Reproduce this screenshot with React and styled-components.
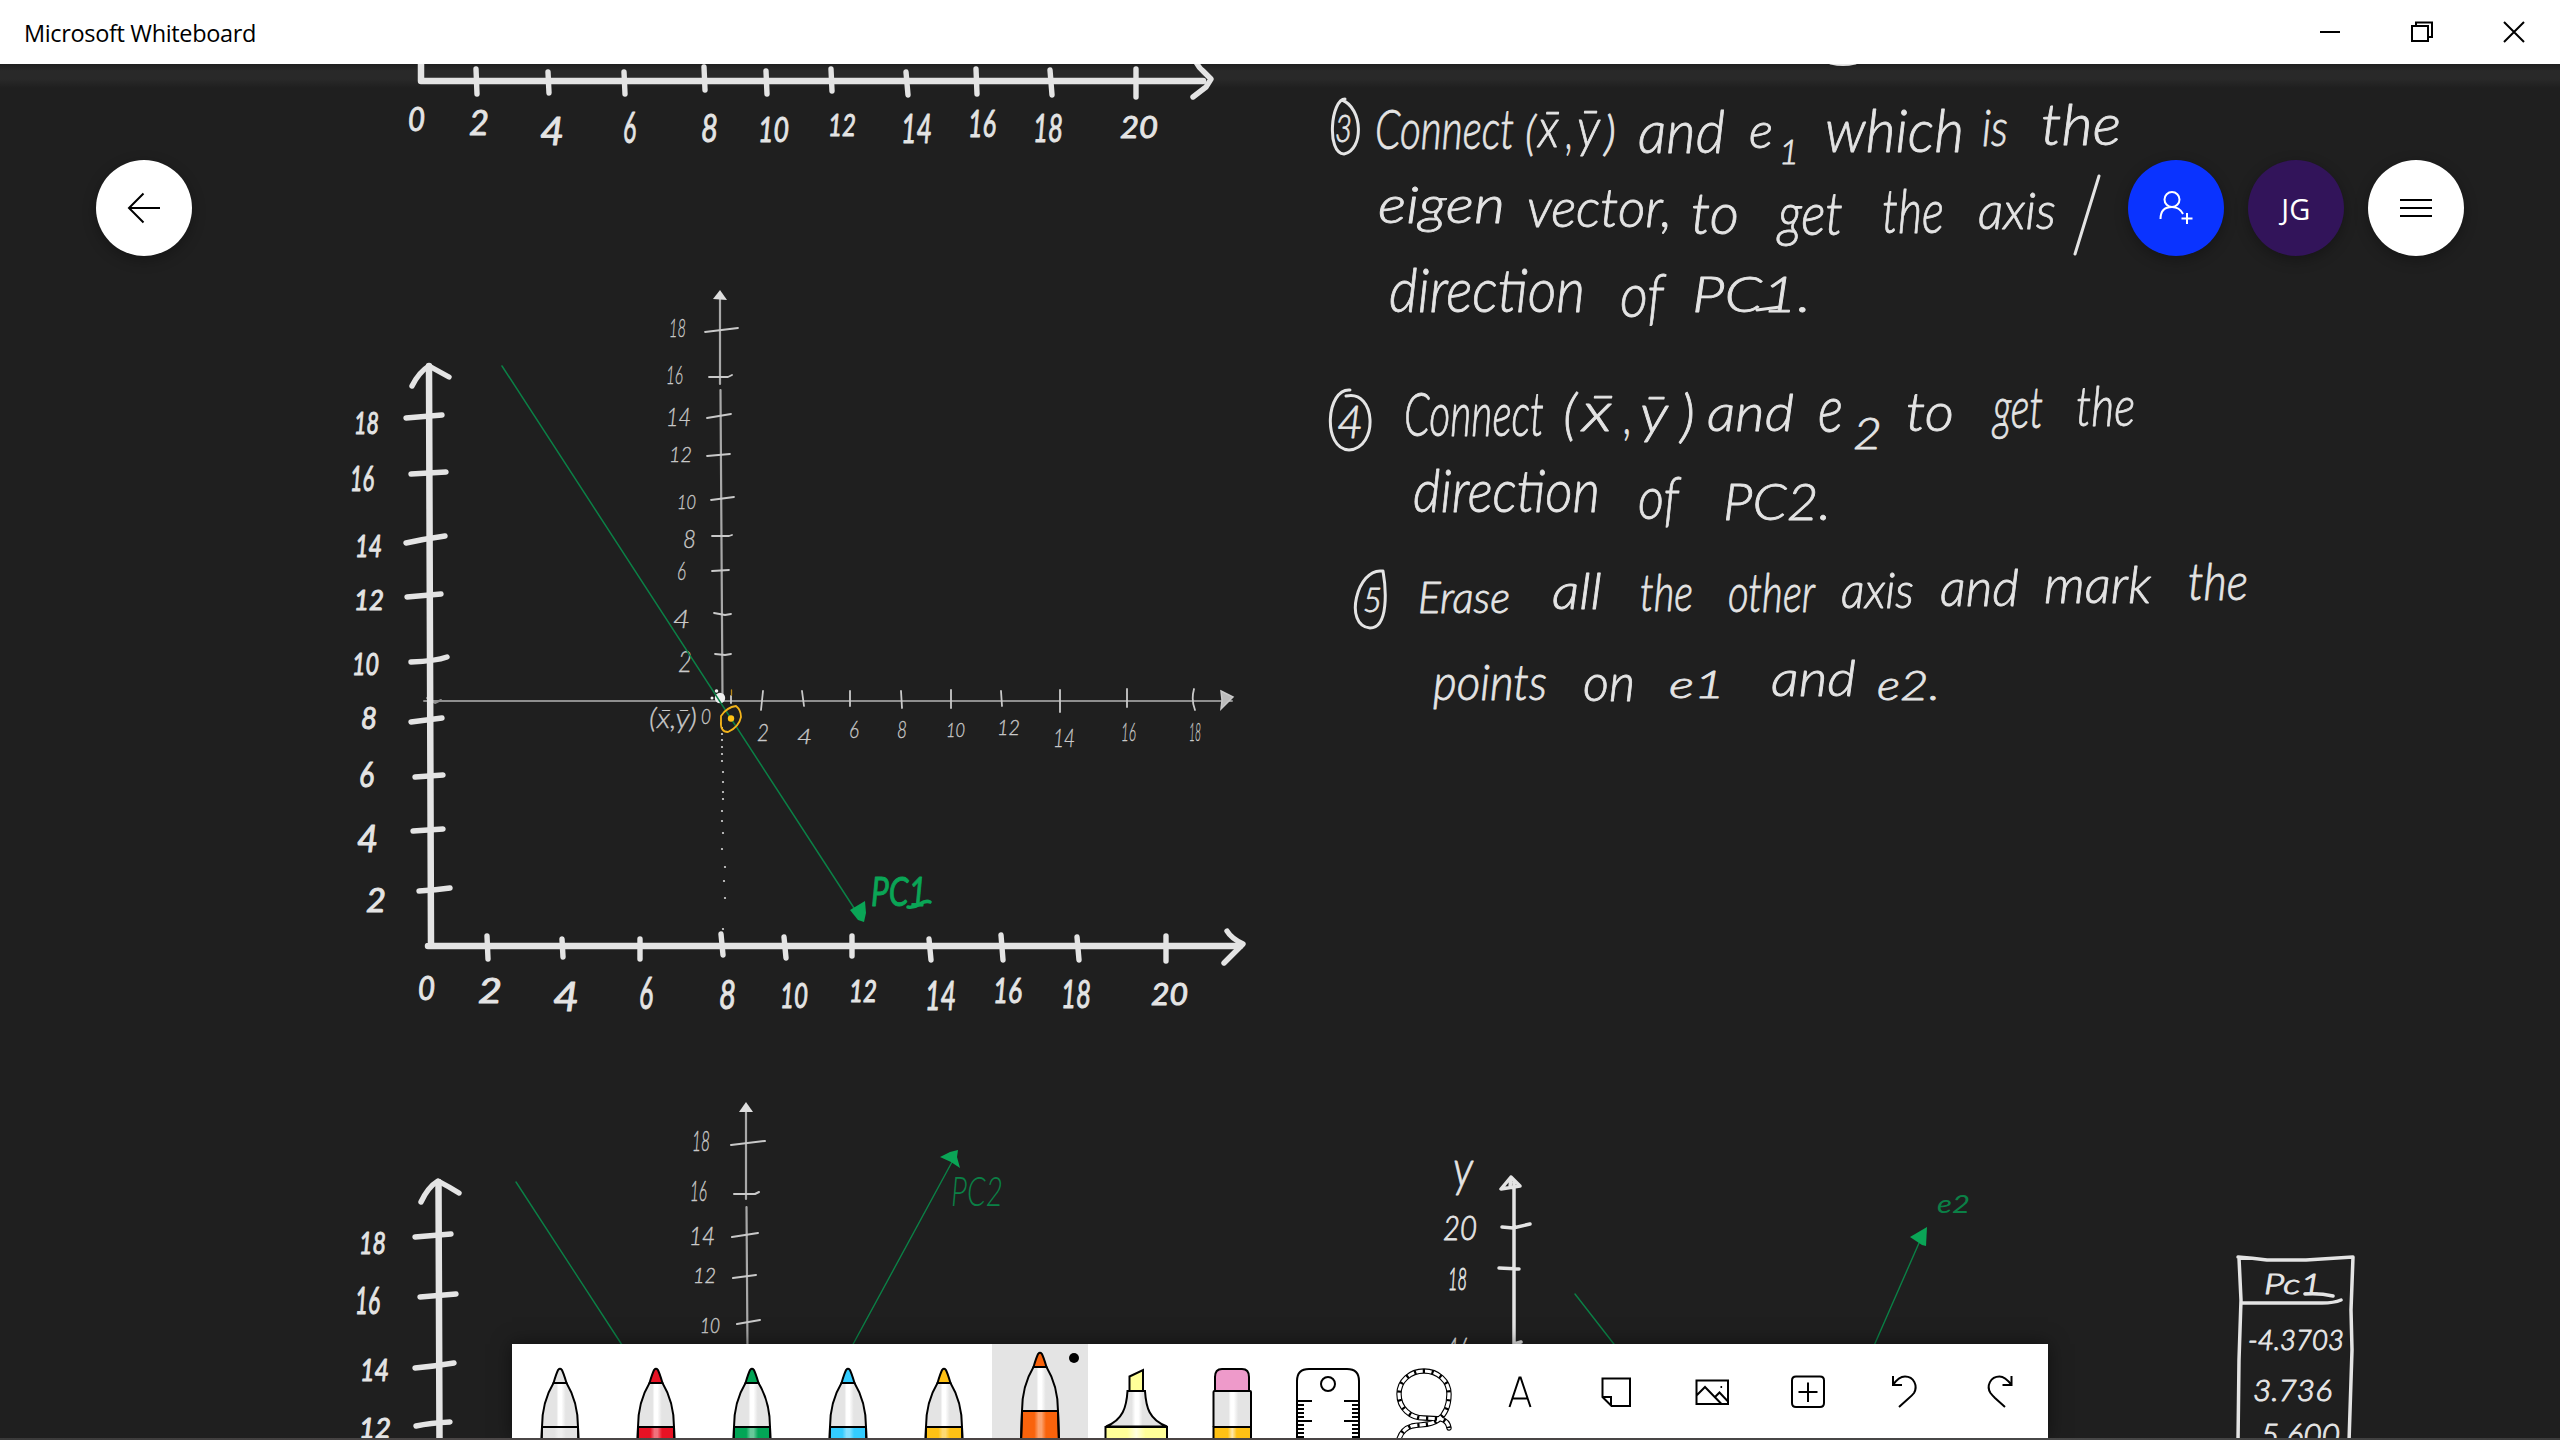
import React from "react";
import styled, { createGlobalStyle } from "styled-components";

const GlobalStyle = createGlobalStyle`
  html, body { margin: 0; padding: 0; background: #1f1f1f; overflow: hidden; }
  *, *::before, *::after { box-sizing: border-box; }
`;

const INK = "#e4e4e4";
const PALE = "#c9c9c9";
const GREEN = "#0aa556";
const DEEP_GREEN = "#0b8046";

/* ---------- window frame ---------- */

const Window = styled.div`
  width: 2560px;
  height: 1440px;
  display: grid;
  grid-template-rows: 64px 1fr 2px;
  background: #1f1f1f;
  font-family: "Open Sans", "Noto Sans", sans-serif;
`;

const TitleBar = styled.header`
  display: flex;
  align-items: center;
  justify-content: space-between;
  background: #ffffff;
  padding-left: 24px;
`;

const Title = styled.span`
  font-size: 23.5px;
  line-height: 32px;
  letter-spacing: -0.35px;
  padding-top: 2px;
  color: #000;
  white-space: nowrap;
`;

const WindowControls = styled.div`
  display: flex;
  height: 100%;
`;

const ControlButton = styled.button`
  width: 92px;
  height: 64px;
  padding: 0;
  border: 0;
  background: transparent;
  display: flex;
  align-items: center;
  justify-content: center;
`;

const Board = styled.main`
  position: relative;
  overflow: hidden;
  background: linear-gradient(#1f1f1f 0, #292929 7px, #292929 15px, #1f1f1f 24px);
`;

const Ink = styled.svg`
  display: block;
  width: 2560px;
  height: 1374px;
`;

const Script = styled.text`
  font-family: Lato, "Noto Sans", sans-serif;
  font-style: italic;
  font-weight: ${(p) => (p.$light ? 300 : 400)};
  stroke-linejoin: round;
`;

const TaskbarEdge = styled.div`
  background: linear-gradient(90deg, #3a3a3a 0, #4b4747 500px, #4a4444 1100px, #484848 2050px, #3c3c3c 100%);
`;

/* ---------- floating buttons ---------- */

const FloatingRow = styled.nav`
  position: absolute;
  top: 96px;
  left: 96px;
  right: 96px;
  display: flex;
  justify-content: space-between;
`;

const ButtonGroup = styled.div`
  display: flex;
  gap: 24px;
`;

const RoundButton = styled.button`
  width: 96px;
  height: 96px;
  padding: 0;
  border: 0;
  border-radius: 50%;
  display: flex;
  align-items: center;
  justify-content: center;
  background: ${(p) => p.$bg};
  color: ${(p) => p.$fg};
  font: 400 29px/1 "Open Sans", "Noto Sans", sans-serif;
  letter-spacing: 0.4px;
  box-shadow: 0 4px 14px rgba(0, 0, 0, 0.3);
`;

/* ---------- toolbar ---------- */

const Toolbar = styled.div`
  position: absolute;
  left: 512px;
  bottom: 0;
  height: 94px;
  display: flex;
  background: #ffffff;
  box-shadow: 0 0 18px rgba(0, 0, 0, 0.5);
`;

const Tool = styled.button`
  width: 96px;
  height: 94px;
  padding: 0;
  border: 0;
  background: ${(p) => (p.$active ? "#e4e4e4" : "transparent")};
`;

const ToolArt = styled.svg`
  display: block;
  width: 96px;
  height: 94px;
  fill: none;
  stroke: #000;
  stroke-width: 2;
`;

function Pen({ color, active }) {
  const id = "barrel" + color.slice(1);
  return (
    <Tool $active={active}>
      <ToolArt viewBox="0 0 96 94">
        <defs>
          <linearGradient id={id}>
            <stop offset="0.4" stopColor="#e4e4e4" />
            <stop offset="0.46" stopColor="#fff" />
            <stop offset="0.54" stopColor="#fff" />
            <stop offset="0.66" stopColor="#e4e4e4" />
          </linearGradient>
          <linearGradient id={id + "s"}>
            <stop offset="0.35" stopColor="#fff" stopOpacity="0" />
            <stop offset="0.46" stopColor="#fff" stopOpacity="0.4" />
            <stop offset="0.54" stopColor="#fff" stopOpacity="0.4" />
            <stop offset="0.66" stopColor="#fff" stopOpacity="0" />
          </linearGradient>
        </defs>
        <g transform={active ? undefined : "translate(0 16)"}>
          <path d="M41.5 23C43 18 45 12 46.2 9.8Q48 7.6 49.8 9.8C51 12 53 18 54.5 23Z" fill={color} />
          <path d="M41.5 23C33 37 30 53 30 67H66C66 53 63 37 54.5 23Z" fill={`url(#${id})`} />
          <path d="M30 67L29 98H67L66 67Z" fill={color} />
          <path d="M30 67L29 98H67L66 67Z" fill={`url(#${id}s)`} />
        </g>
        {active && <circle cx="82" cy="14" r="5" fill="#000" stroke="none" />}
      </ToolArt>
    </Tool>
  );
}

function Highlighter() {
  return (
    <Tool>
      <ToolArt viewBox="0 0 96 94">
        <defs>
          <linearGradient id="neck">
            <stop offset="0.42" stopColor="#e4e4e4" />
            <stop offset="0.48" stopColor="#fff" />
            <stop offset="0.53" stopColor="#fff" />
            <stop offset="0.6" stopColor="#e4e4e4" />
          </linearGradient>
          <linearGradient id="glow">
            <stop offset="0.35" stopColor="#ffff99" />
            <stop offset="0.5" stopColor="#ffffe0" />
            <stop offset="0.65" stopColor="#ffff99" />
          </linearGradient>
        </defs>
        <path d="M41.5 32.5L55 26V47H41.5Z" fill="#ffff99" />
        <path d="M39.5 47H57C58 63 61 76 79 82.5H18C35 76 38.5 63 39.5 47Z" fill="url(#neck)" />
        <path d="M17.5 83H79V98H17.5Z" fill="url(#glow)" />
      </ToolArt>
    </Tool>
  );
}

function Eraser() {
  return (
    <Tool>
      <ToolArt viewBox="0 0 96 94">
        <defs>
          <linearGradient id="band">
            <stop offset="0.38" stopColor="#ffc114" />
            <stop offset="0.5" stopColor="#ffe9ac" />
            <stop offset="0.62" stopColor="#ffc114" />
          </linearGradient>
        </defs>
        <path d="M31 47V33Q31 25 38 25H58Q65 25 65 33V47Z" fill="#ee9aca" />
        <rect x="29.5" y="47" width="37.5" height="36" rx="1" fill="url(#barrelffc114)" />
        <rect x="29.5" y="83" width="37.5" height="16" fill="url(#band)" />
      </ToolArt>
    </Tool>
  );
}

function Ruler() {
  const marks = [57, 61, 65, 69, 73, 77, 81, 85, 89, 93];
  return (
    <Tool>
      <ToolArt viewBox="0 0 96 94">
        <path d="M17 98V37Q17 25 29 25H67Q79 25 79 37V98" />
        <circle cx="48" cy="40" r="7" />
        {marks.map((y) => {
          const w = y === 57 || y === 77 ? 15 : 7;
          return <path key={y} d={`M17 ${y}h${w}M79 ${y}h${-w}`} />;
        })}
      </ToolArt>
    </Tool>
  );
}

function Lasso() {
  const rope =
    "M73 84Q72 77 65 75Q58 74.5 48 74C34 74 23 64 23 50C23 37 34 27 48 27C62 27 73 37 73 50C73 62 70 70 62 76C54 82 46 80 36 82Q26 85 23 95";
  return (
    <Tool>
      <ToolArt viewBox="0 0 96 94">
        <path d={rope} strokeWidth="5.4" strokeLinecap="round" />
        <path d={rope} stroke="#fff" strokeWidth="3.2" strokeLinecap="round" />
        <path d={rope} strokeWidth="4" strokeDasharray="2.2 6.6" strokeDashoffset="-8" />
      </ToolArt>
    </Tool>
  );
}

const glyphs = {
  text: "M37.5 63L47.4 33.5H48.6L58.5 63M41 54.5H55",
  note: "M34.5 34.5H62V62H43.5L34.5 53ZM34.5 53H43V62",
  image: "M32.5 36.5H64V60H32.5ZM32.5 51.5L41 43L57.5 60M51 53L55.5 48.5L64 57.5M56.5 43h1.6",
  insert: "M36 32.5H60Q64 32.5 64 36.5V59Q64 63 60 63H36Q32 63 32 59V36.5Q32 32.5 36 32.5ZM48 38.5V58M38.5 48H57.5",
  undo: "M37 32V41H46M37 41C41 35 44 32.5 49 32.5C58 32.5 62 42 58 49Q56.5 51 53 54L43 63",
  redo: "M59.5 32V41H50.5M59.5 41C55 35 52 32.5 47.500 32.5C38.5 32.5 34 42 38.5 49Q40 51 43 54L53 63",
};

function GlyphTool({ name }) {
  return (
    <Tool aria-label={name}>
      <ToolArt viewBox="0 0 96 94">
        <path d={glyphs[name]} />
      </ToolArt>
    </Tool>
  );
}

/* ---------- handwriting ---------- */

/* A label fitted to a box: [text, left, right, top, baseline] */
function Labels({ items, color = INK, weight = 1.2, light = false }) {
  return items.map(([t, x0, x1, y0, y1], i) => (
    <Script
      key={i}
      $light={light}
      x={x0}
      y={y1}
      fontSize={(y1 - y0) / 0.73}
      textLength={x1 - x0}
      lengthAdjust="spacingAndGlyphs"
      fill={color}
      stroke={color}
      strokeWidth={weight}
    >
      {t}
    </Script>
  ));
}

function Strokes({ d, width = 5.4, color = INK }) {
  return (
    <path d={d} fill="none" stroke={color} strokeWidth={width} strokeLinecap="round" strokeLinejoin="round" />
  );
}

const topLabels = [
  ["0", 408, 425, 107, 131], ["2", 469, 489, 110, 135], ["4", 540, 564, 117, 145],
  ["6", 623, 636, 112, 143], ["8", 701, 718, 114, 142], ["10", 758, 789, 117, 142],
  ["12", 828, 856, 113, 136], ["14", 901, 932, 114, 143], ["16", 968, 996, 110, 137],
  ["18", 1033, 1063, 114, 142], ["20", 1120, 1158, 115, 138],
];

const outerLabels = [
  ["18", 354, 379, 412, 434], ["16", 350, 374, 465, 491], ["14", 355, 382, 534, 557],
  ["12", 354, 384, 590, 610], ["10", 352, 379, 652, 675], ["8", 361, 377, 707, 729],
  ["6", 359, 374, 762, 787], ["4", 357, 378, 825, 852], ["2", 366, 386, 888, 912],
  ["0", 418, 435, 976, 1000], ["2", 478, 502, 978, 1003], ["4", 553, 579, 981, 1011],
  ["6", 639, 653, 977, 1009], ["8", 719, 736, 980, 1009], ["10", 780, 808, 982, 1008],
  ["12", 849, 877, 980, 1002], ["14", 925, 956, 981, 1010], ["16", 993, 1022, 977, 1003],
  ["18", 1061, 1091, 980, 1008], ["20", 1151, 1188, 982, 1005],
];

const innerLabels = [
  ["18", 669, 686, 318, 337], ["16", 666, 683, 365, 384], ["14", 666, 691, 408, 426],
  ["12", 669, 692, 447, 462], ["10", 677, 696, 495, 509], ["8", 683, 696, 530, 548],
  ["6", 677, 686, 562, 580], ["4", 673, 690, 609, 628], ["2", 678, 692, 650, 672],
  ["0", 701, 711, 709, 724], ["2", 757, 769, 724, 741], ["4", 797, 812, 729, 744],
  ["6", 849, 859, 721, 738], ["8", 897, 907, 721, 738], ["10", 946, 965, 723, 737],
  ["12", 997, 1020, 720, 735], ["14", 1053, 1075, 729, 747], ["16", 1121, 1136, 722, 741],
  ["18", 1189, 1201, 723, 741],
];

const lowerOuter = [
  ["18", 359, 386, 1231, 1254], ["16", 355, 380, 1287, 1314], ["14", 360, 389, 1358, 1381],
  ["12", 359, 391, 1418, 1438],
];

const lowerInner = [
  ["18", 692, 710, 1131, 1151], ["16", 690, 707, 1181, 1201], ["14", 689, 715, 1226, 1245],
  ["12", 693, 716, 1267, 1283], ["10", 700, 720, 1318, 1333],
];

const notes = [
  ["3", 1335, 1352, 114, 142], ["Connect", 1375, 1514, 109, 149],
  ["(", 1525, 1536, 116, 150], ["x\u0304", 1538, 1559, 108, 147], [",", 1566, 1573, 110, 149],
  ["y\u0304", 1577, 1600, 108, 147], [")", 1604, 1616, 116, 150],
  ["and", 1638, 1725, 110, 153], ["e", 1749, 1773, 112, 148], ["1", 1779, 1799, 139, 164],
  ["which", 1825, 1964, 109, 152], ["is", 1982, 2008, 108, 146], ["the", 2041, 2121, 103, 145],
  ["eigen", 1378, 1505, 186, 223], ["vector,", 1527, 1672, 188, 227], ["to", 1691, 1739, 192, 234],
  ["get", 1778, 1843, 192, 235], ["the", 1882, 1944, 188, 233], ["axis", 1978, 2056, 191, 229],
  ["direction", 1389, 1585, 268, 312], ["of", 1620, 1664, 272, 317], ["PC1.", 1692, 1811, 276, 312],
  ["4", 1337, 1363, 405, 438], ["Connect", 1404, 1544, 392, 436],
  ["(", 1563, 1577, 394, 434], ["x\u0304", 1582, 1612, 392, 431], [",", 1624, 1632, 395, 434],
  ["y\u0304", 1640, 1668, 394, 433], [")", 1680, 1695, 394, 436],
  ["and", 1707, 1794, 393, 431], ["e", 1818, 1843, 384, 432], ["2", 1853, 1882, 417, 449],
  ["to", 1906, 1954, 392, 431], ["get", 1993, 2043, 386, 428], ["the", 2076, 2135, 385, 426],
  ["direction", 1413, 1600, 469, 512], ["of", 1638, 1679, 476, 519], ["PC2.", 1723, 1831, 483, 520],
  ["5", 1363, 1382, 588, 612], ["Erase", 1418, 1510, 582, 613], ["all", 1552, 1602, 573, 609],
  ["the", 1640, 1693, 574, 611], ["other", 1728, 1815, 573, 612], ["axis", 1841, 1914, 572, 608],
  ["and", 1940, 2019, 568, 606], ["mark", 2044, 2151, 566, 603], ["the", 2188, 2248, 563, 600],
  ["points", 1433, 1547, 664, 700], ["on", 1583, 1635, 664, 701], ["e1", 1669, 1725, 670, 698],
  ["and", 1771, 1856, 660, 696], ["e2.", 1877, 1940, 670, 700],
];

const guideDots = [
  [722, 728], [722, 734], [722, 740], [722, 747], [722, 754], [722, 761], [723, 772], [723, 782],
  [723, 792], [723, 799], [722, 811], [722, 821], [723, 833], [722, 849], [725, 867], [724, 881],
  [725, 898], [723, 929],
];

function TopChart() {
  return (
    <g>
      <Strokes width={6.5} d="M421 58V81H1203" />
      <Strokes
        d="M476 69L477 94M548 72L549 93M624 72L625 94M704 67L705 90M766 71L767 94M831 69L832 91M906 72L908 95M976 69L977 94M1050 70L1052 95M1136 69V97M1196 62Q1199 68 1203 71L1211 79L1206 87L1193 97"
      />
      <Labels items={topLabels} weight={0.9} />
      <ellipse cx="1843" cy="62" rx="16" ry="4" fill={INK} />
    </g>
  );
}

function CentreChart() {
  return (
    <g>
      <Strokes width={2} color="#8f8f8f" d="M424 701H1232M427 698L435 703L441 700" />
      <Strokes width={6.5} d="M429 366L431 946M428 946H1240" />
      <Strokes
        d="M412 386Q419 372 429 366L449 377M406 418L442 415M411 474L446 472M406 543Q424 539 445 536M407 597L441 594M411 662Q436 661 447 657M411 722L442 718M415 777L443 775M413 831L443 829M419 891Q436 890 450 888"
      />
      <Strokes
        d="M487 936L488 959M562 939L563 957M640 939V959M721 934L723 955M784 937L786 958M852 936V956M929 939L931 960M1001 935L1003 960M1077 937L1079 960M1166 936V961M1227 931Q1231 938 1243 944L1224 963"
      />
      <Labels items={outerLabels} weight={1} />

      <Strokes width={2.2} color="#a8a8a8" d="M720 294V384M720.500 390L722.500 697" />
      <path d="M720 290L727 300L713 299Z" fill="#dedede" />
      <Strokes
        width={1.8}
        color={PALE}
        d="M705 332L738 328M709 377H728L732 375M707 418L731 414M707 456L730 454M711 500L734 497M712 536H729L732 535M712 571L729 570M714 613L725 615L731 614M715 654L725 655L731 654"
      />
      <Strokes
        width={1.8}
        color={PALE}
        d="M763 691L761 710M802 691L804 706M850 691V706M901 691L902 708M951 690V708M1001 691L1002 706M1060 690V712M1127 689V707M1194 689Q1191 700 1195 710M731 696V703"
      />
      <path d="M1221 691L1233 697L1221 709L1222 700Z" fill="#bbb" stroke={PALE} strokeWidth="1.5" />
      <Labels items={innerLabels} color={PALE} weight={0.3} light />
      <Labels items={[["(x\u0304,y\u0304)", 649, 697, 708, 728]]} color={PALE} weight={0.3} light />
      {guideDots.map(([x, y]) => (
        <circle key={y} cx={x} cy={y} r="1.1" fill="#d6d6d6" />
      ))}
      <circle cx="720" cy="698" r="5.2" fill="#efefef" />
      <circle cx="716.500" cy="691" r="1.8" fill="#efefef" />
      <circle cx="712" cy="698" r="1.5" fill="#efefef" />
      <Strokes width={1.5} color={DEEP_GREEN} d="M502 366L854 908" />
      <path d="M850 910L865 901L866 913L864 922L858 920Z" fill={GREEN} />
      <Labels items={[["PC1", 871, 927, 876, 906]]} color={GREEN} weight={0.9} />
      <Strokes width={3.6} color={GREEN} d="M908 907Q914 908 920 904T930 902" />
      <Strokes width={1.8} color="#f4b41a" d="M721 716Q727 707 736 706Q741 710 741 717Q739 727 728 732Q720 732 721 721Z" />
      <circle cx="731" cy="718.5" r="3.2" fill="#ffc114" />
      <Strokes width={1.3} color="#b88718" d="M731.5 690V695" />
    </g>
  );
}

function LowerChart() {
  return (
    <g>
      <Strokes width={6.5} d="M438.500 1182L439.500 1440" />
      <Strokes d="M421 1202Q428 1187 438 1181L449 1187L459 1193M415 1237L451 1234M420 1297L456 1294M415 1368Q436 1366 454 1363M416 1426Q430 1423 450 1422" />
      <Labels items={lowerOuter} weight={1} />
      <Strokes width={2.2} color="#a8a8a8" d="M746 1106V1199M746.500 1207L747.500 1350" />
      <path d="M746 1102L753 1112H739Z" fill="#dedede" />
      <Strokes
        width={2}
        color={PALE}
        d="M731 1145L765 1141M734 1194H755L759 1192M732 1237L758 1233M733 1278L756 1275M737 1324L760 1320"
      />
      <Labels items={lowerInner} color={PALE} weight={0.4} light />
      <Strokes width={1.4} color={DEEP_GREEN} d="M516 1182L624 1348M851 1348L952 1162" />
      <path d="M940 1157L950 1152L958 1150L957 1157L960 1168L951 1162Z" fill={GREEN} />
      <Labels items={[["PC2", 951, 1003, 1176, 1206]]} color={DEEP_GREEN} weight={0} light />
    </g>
  );
}

function EigenChart() {
  return (
    <g>
      <Labels
        items={[["y", 1453, 1473, 1150, 1186], ["20", 1443, 1477, 1216, 1240], ["18", 1448, 1467, 1267, 1290], ["16", 1449, 1468, 1337, 1362]]}
        weight={0.8}
        light
      />
      <Strokes width={3.5} d="M1514 1182V1350M1511 1177L1501 1189L1520 1186L1511 1177L1510 1187M1502 1227L1513 1228L1530 1224M1499 1268L1519 1269M1514 1344L1521 1342" />
      <Strokes width={1.4} color={DEEP_GREEN} d="M1575 1294L1617 1348M1873 1348L1919 1243" />
      <path d="M1910 1237L1927 1227L1926 1246L1922 1245Z" fill={GREEN} />
      <Labels items={[["e2", 1937, 1970, 1195, 1213]]} color={DEEP_GREEN} weight={0} />
    </g>
  );
}

function ScoreTable() {
  return (
    <g>
      <Strokes width={3.5} d="M2238 1257Q2252 1258 2267 1260H2306L2353 1257L2351 1310L2352 1350L2349 1442M2239 1258L2241 1300L2239 1360L2238 1442M2243 1303H2322Q2334 1303 2341 1300M2305 1294Q2320 1293 2333 1296" />
      <Labels
        items={[["Pc1", 2264, 2322, 1274, 1294], ["-4.3703", 2248, 2344, 1330, 1350], ["3.736", 2253, 2332, 1379, 1401], ["5.600", 2261, 2340, 1423, 1446]]}
        weight={1}
        light
      />
    </g>
  );
}

function Notes() {
  return (
    <g>
      <Labels items={notes} weight={0.8} light />
      <Strokes
        width={3}
        d="M1345 99C1331 99 1326 153 1344 154C1364 150 1363 108 1342 100M2099 176Q2085 222 2075 254M1757 310L1780 307M1350 390C1326 388 1322 449 1349 450C1379 448 1376 389 1346 396M1382 571C1357 568 1343 626 1370 628C1389 628 1386 588 1383 571Z"
      />
    </g>
  );
}

/* ---------- page ---------- */

export default function App() {
  return (
    <Window>
      <GlobalStyle />
      <TitleBar>
        <Title>Microsoft Whiteboard</Title>
        <WindowControls>
          <ControlButton aria-label="Minimize">
            <svg width="22" height="22" stroke="#000" strokeWidth="2">
              <path d="M1 11H21" />
            </svg>
          </ControlButton>
          <ControlButton aria-label="Restore">
            <svg width="22" height="22" fill="none" stroke="#000" strokeWidth="2">
              <path d="M1 5H17V20H1ZM5 5V1.500H21V16H17" />
            </svg>
          </ControlButton>
          <ControlButton aria-label="Close">
            <svg width="22" height="22" stroke="#000" strokeWidth="2">
              <path d="M1 1L21 21M21 1L1 21" />
            </svg>
          </ControlButton>
        </WindowControls>
      </TitleBar>

      <Board>
        <Ink viewBox="0 64 2560 1374">
          <TopChart />
          <CentreChart />
          <LowerChart />
          <EigenChart />
          <ScoreTable />
          <Notes />
        </Ink>

        <FloatingRow>
          <RoundButton $bg="#fff" $fg="#000" aria-label="Back">
            <svg width="34" height="34" fill="none" stroke="#000" strokeWidth="2">
              <path d="M33 17H2M16.500 2.500L2 17L16.500 31.500" />
            </svg>
          </RoundButton>
          <ButtonGroup>
            <RoundButton $bg="#0a33ff" $fg="#fff" aria-label="Invite">
              <svg width="34" height="36" fill="none" stroke="#fff" strokeWidth="2">
                <circle cx="13" cy="9.500" r="7.500" />
                <path d="M1.500 29C1.500 21 6 17 13 17C18 17 22 20 24 24M28 23V34M22.500 28.500H33.500" />
              </svg>
            </RoundButton>
            <RoundButton $bg="#32145a" $fg="#fff">JG</RoundButton>
            <RoundButton $bg="#fff" $fg="#000" aria-label="Menu">
              <svg width="34" height="20" stroke="#000" strokeWidth="2">
                <path d="M1 2H33M1 10H33M1 18H33" />
              </svg>
            </RoundButton>
          </ButtonGroup>
        </FloatingRow>

        <Toolbar>
          <Pen color="#e3e3e3" />
          <Pen color="#e81224" />
          <Pen color="#02a556" />
          <Pen color="#33ccff" />
          <Pen color="#ffc114" />
          <Pen color="#f9630c" active />
          <Highlighter />
          <Eraser />
          <Ruler />
          <Lasso />
          <GlyphTool name="text" />
          <GlyphTool name="note" />
          <GlyphTool name="image" />
          <GlyphTool name="insert" />
          <GlyphTool name="undo" />
          <GlyphTool name="redo" />
        </Toolbar>
      </Board>
      <TaskbarEdge />
    </Window>
  );
}
